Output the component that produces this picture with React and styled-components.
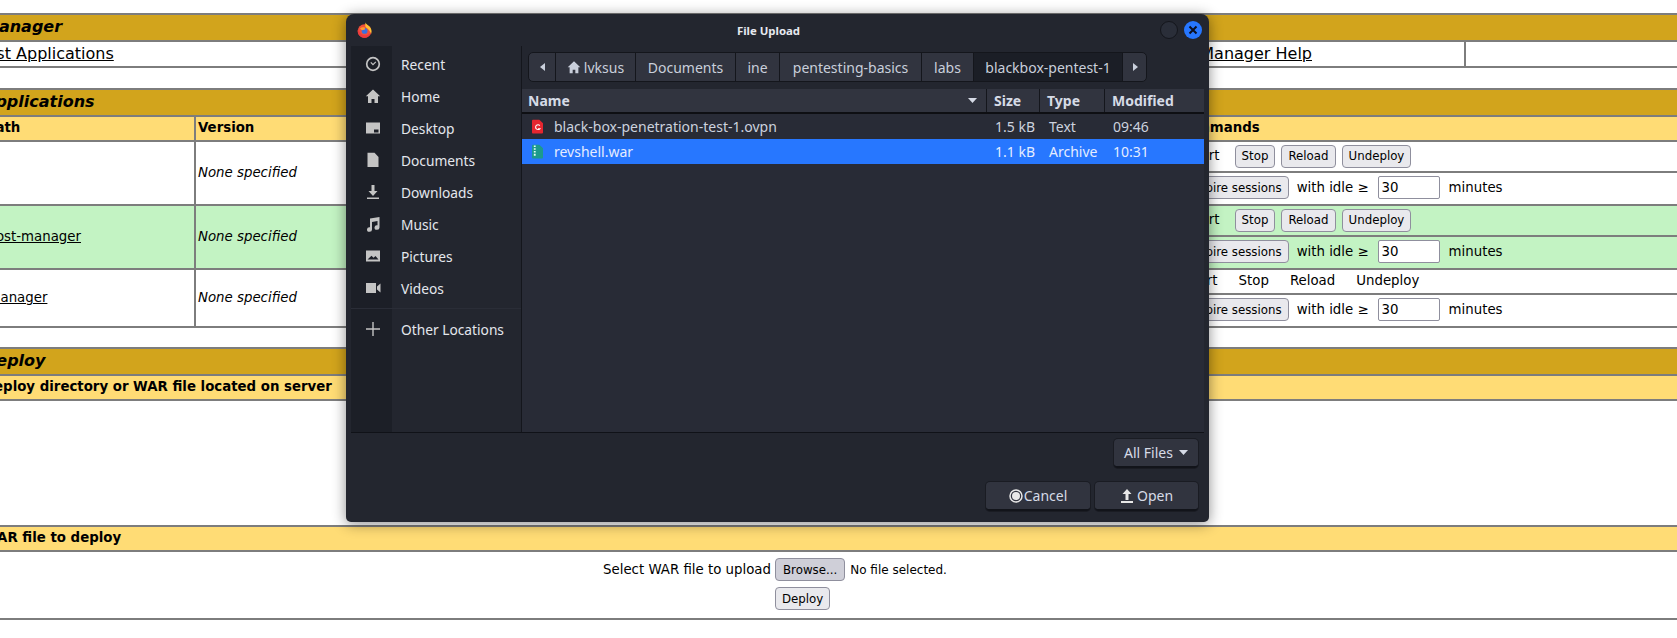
import React from "react";
import styled, { createGlobalStyle } from "styled-components";

const Global = createGlobalStyle`
  html, body { margin: 0; padding: 0; background: #fff; }
  body { width: 1677px; height: 638px; overflow: hidden; font-family: "DejaVu Sans", sans-serif; color: #000; }
  #root { position: relative; width: 1677px; height: 638px; overflow: hidden; }
`;

const LINE = "#7d7d7d";

const Page = styled.div`
  width: 1757px;
  margin-left: -40px;
  padding-top: 13px;
  box-sizing: border-box;
`;
const Table = styled.section`
  margin-bottom: ${(p) => p.$after || 0}px;
  border-bottom: 2px solid ${LINE};
`;
const Title = styled.div`
  height: 27px;
  box-sizing: border-box;
  border-top: 2px solid ${LINE};
  background: #d2a41c;
  padding-left: 23px;
  font: italic bold 16px/24px "DejaVu Sans", sans-serif;
`;
const HeaderBar = styled.div`
  height: 25px;
  box-sizing: border-box;
  border-top: 2px solid ${LINE};
  background: #ffdc75;
  font: bold 13.33px/22px "DejaVu Sans", sans-serif;
  display: grid;
  grid-template-columns: ${(p) => p.$cols || "1fr"};
`;
const HeaderCell = styled.div`
  padding-left: ${(p) => p.$pad ?? 4}px;
  border-left: ${(p) => (p.$rule ? `2px solid ${LINE}` : "0")};
`;
const LinkRow = styled.div`
  display: grid;
  grid-template-columns: 1504px 1fr;
  height: 26px;
  box-sizing: border-box;
  border-top: 2px solid ${LINE};
  font: 16px/24px "DejaVu Sans", sans-serif;
`;
const LinkCell = styled.div`
  display: flex;
  justify-content: space-between;
  padding-left: 23px;
  padding-right: 152px;
`;
const EmptyCell = styled.div`
  border-left: 2px solid ${LINE};
`;
const A = styled.a`
  color: #000;
  text-decoration: underline;
`;
const AppRow = styled.div`
  display: grid;
  grid-template-columns: 234px 988px 1fr;
  border-top: 2px solid ${LINE};
  background: ${(p) => (p.$green ? "#c3f3c3" : "#fff")};
  font: 13.33px/16px "DejaVu Sans", sans-serif;
`;
const PathCell = styled.div`
  display: flex;
  align-items: center;
  padding-left: 23px;
`;
const VersionCell = styled.div`
  display: flex;
  align-items: center;
  padding-left: 2px;
  border-left: 2px solid ${LINE};
  font-style: italic;
`;
const Commands = styled.div`
  display: flex;
  flex-direction: column;
`;
const CmdLine = styled.div`
  height: ${(p) => p.$h || 29}px;
  box-sizing: border-box;
  display: flex;
  align-items: center;
  padding-left: 2px;
  padding-bottom: ${(p) => p.$bottom ?? 2}px;
  border-top: ${(p) => (p.$rule ? `2px solid ${LINE}` : "0")};
`;
const Label = styled.span`
  margin-right: ${(p) => p.$gap ?? 0}px;
  margin-left: ${(p) => p.$left ?? 0}px;
  white-space: pre;
`;
const Btn = styled.button`
  height: 23px;
  box-sizing: border-box;
  margin: 0 ${(p) => p.$gap ?? 6}px 0 0;
  padding: 0 ${(p) => (p.$pressed ? 7 : 6)}px;
  border: 1px solid #8f8f9d;
  border-radius: 4px;
  background: ${(p) => (p.$pressed ? "#cfcfd8" : "#e9e9ed")};
  color: #000;
  font: 11.8px "DejaVu Sans", sans-serif;
`;
const Num = styled.input`
  width: 62px;
  height: 23px;
  box-sizing: border-box;
  margin: 0 9px;
  padding: 0 3px;
  border: 1px solid #8f8f9d;
  border-radius: 2px;
  background: #fff;
  font: 13.33px "DejaVu Sans", sans-serif;
`;
const DeployBody = styled.div`
  height: 126px;
  box-sizing: border-box;
  border-top: 2px solid ${LINE};
`;
const UploadForm = styled.div`
  display: grid;
  grid-template-columns: 811px auto;
  column-gap: 4px;
  row-gap: 6px;
  align-items: center;
  align-content: start;
  height: 68px;
  box-sizing: border-box;
  padding-top: 6px;
  border-top: 2px solid ${LINE};
  font: 13.33px "DejaVu Sans", sans-serif;
`;
const FormLabel = styled.div`
  text-align: right;
`;
const FormControl = styled.div`
  display: flex;
  align-items: center;
  gap: 5px;
  font-size: 12px;
`;

/* ---------- dialog ---------- */
const Dialog = styled.div`
  position: absolute;
  left: 346px;
  top: 14px;
  width: 863px;
  height: 508px;
  box-sizing: border-box;
  display: flex;
  flex-direction: column;
  background: #23262f;
  border-radius: 8px 8px 5px 5px;
  box-shadow: 0 2px 14px rgba(0, 0, 0, 0.45);
  font: 14px "Noto Sans", sans-serif;
  color: #d6dbe6;
`;
const TitleRow = styled.div`
  height: 32px;
  flex: none;
  display: flex;
  align-items: center;
  padding: 0 7px 0 11px;
`;
const DialogTitle = styled.div`
  flex: 1;
  text-align: center;
  font-weight: 700;
  font-size: 11.4px;
  color: #e6e9ef;
  padding-left: 11px;
`;
const RoundBtn = styled.div`
  width: 18px;
  height: 18px;
  margin-left: 6px;
  border-radius: 50%;
  box-sizing: border-box;
  display: flex;
  align-items: center;
  justify-content: center;
  background: ${(p) => (p.$close ? "#2777ff" : "#2a2e39")};
  border: ${(p) => (p.$close ? "0" : "1px solid #14161c")};
`;
const Body = styled.div`
  height: 386px;
  flex: none;
  margin: 0 5px;
  display: flex;
  border-bottom: 1px solid #101218;
`;
const Sidebar = styled.nav`
  width: 171px;
  flex: none;
  box-sizing: border-box;
  padding-top: 2px;
  display: flex;
  flex-direction: column;
  border-right: 1px solid #14161c;
  font-size: 13.75px;
  background: linear-gradient(to right, #1c1f27 41px, #23262f 41px);
`;
const Place = styled.div`
  height: 32px;
  flex: none;
  display: flex;
  align-items: center;
  color: #e4e7ed;
  margin-top: ${(p) => p.$top || 0}px;
`;
const PlaceIcon = styled.span`
  width: 44px;
  flex: none;
  padding-right: 6px;
  display: flex;
  justify-content: center;
  color: #c4c4c4;
`;
const Separator = styled.div`
  height: 1px;
  background: #2a2d37;
  margin-top: 4px;
`;
const Main = styled.div`
  flex: 1;
  min-width: 0;
  display: flex;
  flex-direction: column;
  background: #282b36;
`;
const Crumbs = styled.div`
  height: 43px;
  flex: none;
  box-sizing: border-box;
  padding: 6px 0 0 6px;
  background: #23262f;
`;
const PathBar = styled.div`
  display: flex;
  width: 619px;
  height: 30px;
  box-sizing: border-box;
  border: 1px solid #14161c;
  border-radius: 5px;
  background: #31343f;
  overflow: hidden;
`;
const Crumb = styled.div`
  width: ${(p) => p.$w}px;
  flex: none;
  box-sizing: border-box;
  display: flex;
  align-items: center;
  justify-content: center;
  gap: ${(p) => (p.$home ? 3 : 0)}px;
  border-right: ${(p) => (p.$last ? "0" : "1px solid #14161c")};
  background: ${(p) => (p.$active ? "#1b1e26" : "transparent")};
  color: #c9cfdb;
  white-space: nowrap;
`;
const ColHead = styled.div`
  height: 25px;
  flex: none;
  box-sizing: border-box;
  display: grid;
  grid-template-columns: 465px 53px 65px 99px;
  background: #31343f;
  border-bottom: 2px solid #0e0f13;
  font-weight: 700;
  line-height: 22px;
  color: #d6dbe6;
`;
const ColCell = styled.div`
  padding-left: ${(p) => p.$pad ?? 7}px;
  border-right: ${(p) => (p.$last ? "0" : "1px solid #14161c")};
  display: flex;
  align-items: center;
  justify-content: space-between;
  padding-right: 9px;
`;
const FileRow = styled.div`
  height: 25px;
  flex: none;
  display: grid;
  grid-template-columns: 465px 53px 65px 99px;
  align-items: center;
  background: ${(p) => (p.$sel ? "#2777ff" : "transparent")};
  color: ${(p) => (p.$sel ? "#e4ecff" : "#ccd2de")};
`;
const FileName = styled.div`
  display: flex;
  align-items: center;
  padding-left: 10px;
  gap: 11px;
`;
const FileCol = styled.div`
  padding-left: ${(p) => p.$pad}px;
  white-space: nowrap;
`;
const Footer = styled.div`
  flex: 1;
  display: flex;
  flex-direction: column;
  align-items: flex-end;
  padding: 6px 11px 0 0;
`;
const DarkBtn = styled.div`
  height: 29px;
  width: ${(p) => p.$w}px;
  box-sizing: border-box;
  display: flex;
  align-items: center;
  justify-content: center;
  gap: ${(p) => p.$gap ?? 3}px;
  background: #31343f;
  border-radius: 4px;
  border-bottom: 2px solid #12141a;
  box-shadow: 0 0 0 1px #1a1c23;
  color: #d6dbe6;
`;
const Actions = styled.div`
  display: flex;
  gap: 5px;
  margin-top: 14px;
`;

const Ico = ({ children, s = 16 }) => (
  <svg width={s} height={s} viewBox="0 0 16 16" fill="currentColor">
    {children}
  </svg>
);

const Firefox = () => (
  <svg width="15" height="16" viewBox="0 0 15 16">
    <circle cx="7.5" cy="9" r="6.8" fill="#f2503a" />
    <path d="M8.500.400c.4 2 3.400 3 5 5.400 1.200 2 1.300 4.400.600 6.200-1-2.600-2.600-5-5-6.400C8.100 4.400 8.100 2.200 8.500.400z" fill="#ffc233" />
    <path d="M1 6.200c.6 3.400 3 6.400 6.500 7 2.600.4 5-.8 6.400-3-.3 3-3 5.600-6.400 5.600-3.800 0-6.800-3-6.800-6.800 0-1 .3-2 .8-2.800z" fill="#ee3a3e" />
    <circle cx="7.600" cy="8.900" r="2.900" fill="#3b6fe0" />
    <path d="M3 6.500C4.200 5.300 6 5 7.800 5.600l.2 1.800-3 .9z" fill="#ff9b2e" />
  </svg>
);

const homePath = "M8 1.500.8 8.300H3V15h3.500v-4h3v4H13V8.300h2.200z";

const places = [
  ["Recent", <Ico key="r"><circle cx="8" cy="8" r="6.3" fill="none" stroke="currentColor" strokeWidth="1.7" /><path d="M5.800 6.300 8 8.700 10.800 5.800" fill="none" stroke="currentColor" strokeWidth="1.2" /></Ico>],
  ["Home", <Ico key="h"><path d={homePath} /></Ico>],
  ["Desktop", <Ico key="d"><path d="M1 2.500h14v11H1zM9 9.500v3h4.500v-3z" fillRule="evenodd" /></Ico>],
  ["Documents", <Ico key="o"><path d="M2.500.8h7l4 4.200V15h-11z" /></Ico>],
  ["Downloads", <Ico key="w"><path d="M6.500 1h3v6h3L8 12 3.500 7h3zM2 13.500h12V15H2z" /></Ico>],
  ["Music", <Ico key="m"><path d="M5 2.500 14.500 1v10.500a2.500 2.300 0 1 1-2-2.200V5L7 6v7.500a2.500 2.300 0 1 1-2-2.200z" /></Ico>],
  ["Pictures", <Ico key="p"><path d="M1 2.500h14v11H1zM2.500 11.500h11L10.500 8 8.500 9.800 6.500 7.800z" fillRule="evenodd" /></Ico>],
  ["Videos", <Ico key="v"><path d="M1 3h10v10H1zM12 6.500 15.500 3.500v9L12 9.500z" /></Ico>],
];

const RedFile = () => (
  <svg width="11" height="15" viewBox="0 0 12 15">
    <path d="M1 0h7l4 4v10a1 1 0 0 1-1 1H1a1 1 0 0 1-1-1V1a1 1 0 0 1 1-1z" fill="#e5262f" />
    <path d="M8.500 6.500A2.600 2.600 0 1 0 8.500 10H6.500" fill="none" stroke="#fff" strokeWidth="1.2" />
  </svg>
);
const ZipFile = () => (
  <svg width="11" height="15" viewBox="0 0 12 15">
    <path d="M1 0h7l4 4v10a1 1 0 0 1-1 1H1a1 1 0 0 1-1-1V1a1 1 0 0 1 1-1z" fill="#1c9a8c" />
    <path d="M2 1h2v1.500H2zM2 4h2v1.500H2zM2 7h2v1.500H2zM2 10h2v2H2z" fill="#e7fff6" />
  </svg>
);
const Tri = ({ d }) => {
  const p = { l: "M6 1 1 5l5 4z", r: "M1 1l5 4-5 4z", b: "M0 1h9L4.500 6z" }[d];
  return (
    <svg width={d === "b" ? 9 : 7} height={d === "b" ? 7 : 10} viewBox={d === "b" ? "0 0 9 7" : "0 0 7 10"} fill="currentColor">
      <path d={p} />
    </svg>
  );
};

const ExpireLine = () => (
  <CmdLine $rule $h={33}>
    <Btn $gap={0}>Expire sessions</Btn>
    <Label $left={8}>with idle ≥</Label>
    <Num defaultValue="30" readOnly />
    <Label>minutes</Label>
  </CmdLine>
);
const ButtonLine = () => (
  <CmdLine $bottom={1}>
    <Label $left={3} $gap={15}>Start</Label>
    <Btn>Stop</Btn>
    <Btn>Reload</Btn>
    <Btn>Undeploy</Btn>
  </CmdLine>
);

export default function App() {
  return (
    <>
      <Global />
      <Page>
        <Table $after={20}>
          <Title>Manager</Title>
          <LinkRow>
            <LinkCell>
              <A>List Applications</A>
              <A>HTML Manager Help</A>
              <A>Manager Help</A>
            </LinkCell>
            <EmptyCell />
          </LinkRow>
        </Table>

        <Table $after={19}>
          <Title>Applications</Title>
          <HeaderBar $cols="234px 983px 1fr">
            <HeaderCell $pad={26}>Path</HeaderCell>
            <HeaderCell $rule $pad={2}>Version</HeaderCell>
            <HeaderCell $pad={0}>Commands</HeaderCell>
          </HeaderBar>
          <AppRow>
            <PathCell><A>/</A></PathCell>
            <VersionCell>None specified</VersionCell>
            <Commands>
              <ButtonLine />
              <ExpireLine />
            </Commands>
          </AppRow>
          <AppRow $green>
            <PathCell><A>/host-manager</A></PathCell>
            <VersionCell>None specified</VersionCell>
            <Commands>
              <ButtonLine />
              <ExpireLine />
            </Commands>
          </AppRow>
          <AppRow>
            <PathCell><A>/manager</A></PathCell>
            <VersionCell>None specified</VersionCell>
            <Commands>
              <CmdLine $h={23}>
                <Label $left={1} $gap={21}>Start</Label>
                <Label $gap={21}>Stop</Label>
                <Label $gap={21}>Reload</Label>
                <Label>Undeploy</Label>
              </CmdLine>
              <ExpireLine />
            </Commands>
          </AppRow>
        </Table>

        <Table>
          <Title>Deploy</Title>
          <HeaderBar><HeaderCell $pad={23}>Deploy directory or WAR file located on server</HeaderCell></HeaderBar>
          <DeployBody />
          <HeaderBar><HeaderCell $pad={23}>WAR file to deploy</HeaderCell></HeaderBar>
          <UploadForm>
            <FormLabel>Select WAR file to upload</FormLabel>
            <FormControl><Btn $pressed $gap={0}>Browse...</Btn>No file selected.</FormControl>
            <span />
            <div><Btn $gap={0}>Deploy</Btn></div>
          </UploadForm>
        </Table>
      </Page>

      <Dialog>
        <TitleRow>
          <Firefox />
          <DialogTitle>File Upload</DialogTitle>
          <RoundBtn />
          <RoundBtn $close>
            <svg width="10" height="10" viewBox="0 0 10 10"><path d="M1.500 1.500l7 7M8.500 1.500l-7 7" stroke="#0c1020" strokeWidth="2" /></svg>
          </RoundBtn>
        </TitleRow>
        <Body>
          <Sidebar>
            {places.map(([name, icon]) => (
              <Place key={name}><PlaceIcon>{icon}</PlaceIcon>{name}</Place>
            ))}
            <Separator />
            <Place $top={4}>
              <PlaceIcon><Ico><path d="M7.300 1h1.400v6.300H15v1.400H8.700V15H7.300V8.700H1V7.300h6.300z" /></Ico></PlaceIcon>
              Other Locations
            </Place>
          </Sidebar>
          <Main>
            <Crumbs>
              <PathBar>
                <Crumb $w={27}><Tri d="l" /></Crumb>
                <Crumb $w={80} $home><Ico s={14}><path d={homePath} /></Ico>lvksus</Crumb>
                <Crumb $w={100}>Documents</Crumb>
                <Crumb $w={44}>ine</Crumb>
                <Crumb $w={142}>pentesting-basics</Crumb>
                <Crumb $w={52}>labs</Crumb>
                <Crumb $w={149} $active>blackbox-pentest-1</Crumb>
                <Crumb $w={24} $last><Tri d="r" /></Crumb>
              </PathBar>
            </Crumbs>
            <ColHead>
              <ColCell $pad={6}>Name<Tri d="b" /></ColCell>
              <ColCell>Size</ColCell>
              <ColCell>Type</ColCell>
              <ColCell $last>Modified</ColCell>
            </ColHead>
            <FileRow>
              <FileName><RedFile />black-box-penetration-test-1.ovpn</FileName>
              <FileCol $pad={8}>1.5 kB</FileCol>
              <FileCol $pad={9}>Text</FileCol>
              <FileCol $pad={8}>09:46</FileCol>
            </FileRow>
            <FileRow $sel>
              <FileName><ZipFile />revshell.war</FileName>
              <FileCol $pad={8}>1.1 kB</FileCol>
              <FileCol $pad={9}>Archive</FileCol>
              <FileCol $pad={8}>10:31</FileCol>
            </FileRow>
          </Main>
        </Body>
        <Footer>
          <DarkBtn $w={84} $gap={6}>All Files <Tri d="b" /></DarkBtn>
          <Actions>
            <DarkBtn $w={104} $gap={1}>
              <svg width="14" height="14" viewBox="0 0 14 14"><circle cx="7" cy="7" r="6" fill="none" stroke="#e8e8e8" strokeWidth="1.5" /><circle cx="7" cy="7" r="4" fill="#e8e8e8" /></svg>
              Cancel
            </DarkBtn>
            <DarkBtn $w={103}>
              <svg width="14" height="14" viewBox="0 0 14 14" fill="#e8e8e8"><path d="M7 0l4.500 5H8.500v6h-3V5H2.500zM1 12h12v2H1z" /></svg>
              Open
            </DarkBtn>
          </Actions>
        </Footer>
      </Dialog>
    </>
  );
}
